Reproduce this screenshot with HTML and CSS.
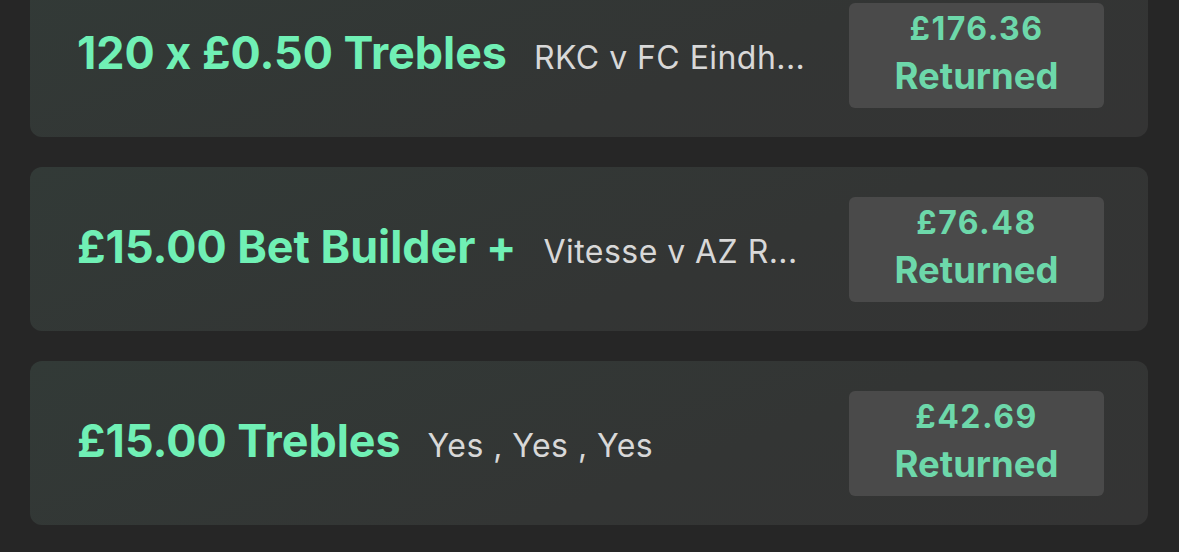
FILE: index.html
```html
<!DOCTYPE html>
<html lang="en">

<head>
    <meta charset="UTF-8">
    <link rel="stylesheet" href="styles.css">
    <title>Settled Bets</title>
</head>

<body>
    <div class="bet-list">
        <div class="bet-card">
            <div class="bet-info">
                <span class="bet-title">120 x £0.50 Trebles</span>
                <span class="bet-desc">RKC v FC Eindh...</span>
            </div>
            <div class="bet-return">
                <span class="return-amount">£176.36</span>
                <span class="return-label">Returned</span>
            </div>
        </div>
        <div class="bet-card">
            <div class="bet-info">
                <span class="bet-title">£15.00 Bet Builder +</span>
                <span class="bet-desc">Vitesse v AZ R...</span>
            </div>
            <div class="bet-return">
                <span class="return-amount">£76.48</span>
                <span class="return-label">Returned</span>
            </div>
        </div>
        <div class="bet-card">
            <div class="bet-info">
                <span class="bet-title">£15.00 Trebles</span>
                <span class="bet-desc">Yes , Yes , Yes</span>
            </div>
            <div class="bet-return">
                <span class="return-amount">£42.69</span>
                <span class="return-label">Returned</span>
            </div>
        </div>
    </div>
</body>

</html>
```

FILE: styles.css
```css
body {
    margin: 0;
    background-color: #262626;
    font-family: Inter, "Noto Sans", sans-serif;
    overflow: hidden;
}

.bet-list {
    display: flex;
    flex-direction: column;
    gap: 30px;
    margin-top: -27px;
    padding: 0 31px 0 30px;
}

.bet-card {
    display: flex;
    align-items: center;
    height: 164px;
    padding: 0 44px 0 47px;
    border-radius: 12px;
    background: linear-gradient(160deg, #323a37 0%, #333534 60%, #343434 100%);
}

.bet-info {
    display: flex;
    align-items: baseline;
    flex: 1;
    min-width: 0;
    margin: 0 20px 4px 0;
}

.bet-title {
    font-size: 44.8px;
    font-weight: 700;
    color: #70f0b5;
    white-space: nowrap;
}

.bet-desc {
    min-width: 0;
    margin-left: 27px;
    font-size: 32px;
    letter-spacing: 0.45px;
    color: #d8d8d8;
    white-space: nowrap;
    overflow: hidden;
    text-overflow: ellipsis;
}

.bet-return {
    display: flex;
    flex-direction: column;
    align-items: center;
    gap: 4px;
    width: 255px;
    height: 105px;
    padding-top: 6px;
    box-sizing: border-box;
    flex-shrink: 0;
    border-radius: 6px;
    background-color: #4a4a4a;
    color: #6dd8aa;
    font-weight: 700;
}

.return-amount {
    font-size: 32px;
    line-height: 40px;
    letter-spacing: 1.5px;
}

.return-label {
    font-size: 36.5px;
    line-height: 46px;
}
```
